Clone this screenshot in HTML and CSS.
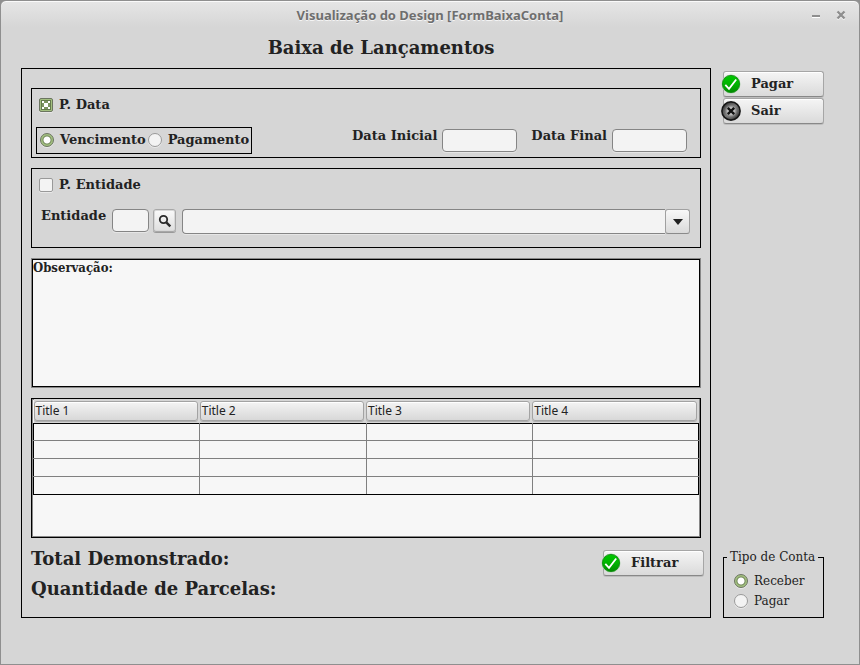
FILE: index.html
```html
<!DOCTYPE html>
<html lang="pt-BR">
<head>
<meta charset="utf-8">
<title>Visualização do Design [FormBaixaConta]</title>
<link rel="stylesheet" href="styles.css">
</head>
<body>
<svg class="defs" width="0" height="0" aria-hidden="true">
  <defs>
    <linearGradient id="green" x1="0" y1="0" x2="0" y2="1"><stop offset="0" stop-color="#00c800"/><stop offset=".5" stop-color="#00b400"/><stop offset="1" stop-color="#008a00"/></linearGradient>
    <linearGradient id="steel" x1="0" y1="0" x2="1" y2="1"><stop offset="0" stop-color="#2c2c2c"/><stop offset=".5" stop-color="#777"/><stop offset="1" stop-color="#303030"/></linearGradient>
    <radialGradient id="shine" cx=".5" cy=".5" r=".5"><stop offset="0" stop-color="#f0f0f0"/><stop offset=".5" stop-color="#b8b8b8"/><stop offset="1" stop-color="#777" stop-opacity="0"/></radialGradient>
  </defs>
  <symbol id="ok" viewBox="0 0 20 20">
    <circle cx="10" cy="10" r="9.5" fill="#a9cfa9"/>
    <circle cx="10" cy="10" r="8.6" fill="url(#green)" stroke="#078a07" stroke-width=".8"/>
    <path d="M4.3 10.8l3.7 4 7.2-9.3" fill="none" stroke="#fff" stroke-width="1.8"/>
  </symbol>
  <symbol id="exit" viewBox="0 0 20 20">
    <circle cx="10" cy="10" r="9.1" fill="url(#steel)" stroke="#161616" stroke-width="1.6"/>
    <circle cx="10" cy="10" r="7.4" fill="url(#shine)"/>
    <path d="M6.8 6.8l6.4 6.4M13.2 6.8l-6.4 6.4" stroke="#111" stroke-width="2.4"/>
  </symbol>
</svg>
<div class="window">
  <header class="titlebar">
    <span class="caption">Visualização do Design [FormBaixaConta]</span>
    <div class="controls">
      <button type="button" aria-label="Minimizar"><svg width="10" height="10"><path d="M1 7h8" stroke="#fff" stroke-width="2"/><path d="M1 6h8" stroke="#8e8e8e" stroke-width="2"/></svg></button>
      <button type="button" aria-label="Fechar"><svg width="10" height="10"><path d="M1.5 2.5l7 7m0-7l-7 7" stroke="#f4f4f4" stroke-width="2.4"/><path d="M1.5 1.5l7 7m0-7l-7 7" stroke="#8e8e8e" stroke-width="2.4"/></svg></button>
    </div>
  </header>
  <form class="content">
    <main>
      <h1>Baixa de Lançamentos</h1>
      <section class="panel">
        <div class="group dates">
          <label class="option"><input type="checkbox" checked>P. Data</label>
          <div class="line">
            <div class="choice">
              <label class="option"><input type="radio" name="por" checked>Vencimento</label>
              <label class="option"><input type="radio" name="por">Pagamento</label>
            </div>
            <div class="range">
              <label for="ini">Data Inicial</label><input id="ini" class="field date" type="text">
              <label for="fim">Data Final</label><input id="fim" class="field date" type="text">
            </div>
          </div>
        </div>
        <div class="group entity">
          <label class="option"><input type="checkbox">P. Entidade</label>
          <div class="line">
            <label for="ent">Entidade</label>
            <input id="ent" class="field code" type="text">
            <button type="button" class="search" aria-label="Buscar"><svg width="14" height="14" viewBox="0 0 14 14" fill="none" stroke="#2a2a2a"><circle cx="5.5" cy="5.5" r="3.7" stroke-width="1.8"/><path d="M8.3 8.3l4 4" stroke-width="2.4"/></svg></button>
            <div class="combo">
              <select aria-label="Nome da entidade"><option></option></select>
              <span class="arrow"><svg width="10" height="6"><path d="M0 0h10L5 6z" fill="#222"/></svg></span>
            </div>
          </div>
        </div>
        <textarea class="notes" aria-label="Observação">Observação:</textarea>
        <div class="grid">
          <table>
            <thead><tr><th><span>Title 1</span></th><th><span>Title 2</span></th><th><span>Title 3</span></th><th><span>Title 4</span></th></tr></thead>
            <tbody>
              <tr><td></td><td></td><td></td><td></td></tr>
              <tr><td></td><td></td><td></td><td></td></tr>
              <tr><td></td><td></td><td></td><td></td></tr>
              <tr><td></td><td></td><td></td><td></td></tr>
            </tbody>
          </table>
        </div>
        <div class="summary">
          <div class="totals"><p>Total Demonstrado:</p><p>Quantidade de Parcelas:</p></div>
          <button type="button" class="action"><svg width="20" height="20"><use href="#ok"/></svg>Filtrar</button>
        </div>
      </section>
    </main>
    <aside>
      <div class="actions">
        <button type="button" class="action"><svg width="20" height="20"><use href="#ok"/></svg>Pagar</button>
        <button type="button" class="action"><svg width="20" height="20"><use href="#exit"/></svg>Sair</button>
      </div>
      <fieldset>
        <legend>Tipo de Conta</legend>
        <label class="option"><input type="radio" name="tipo" checked>Receber</label>
        <label class="option"><input type="radio" name="tipo">Pagar</label>
      </fieldset>
    </aside>
  </form>
</div>
</body>
</html>
```
FILE: styles.css
```css
* { box-sizing: border-box; }
body { margin: 0; background: #8f8f8f; color: #222; font: bold 13px/16px "DejaVu Serif", serif; }
.defs { position: absolute; }
h1, p { margin: 0; }
button, input, select, textarea { font: inherit; color: inherit; margin: 0; }

.window {
  min-height: 100vh;
  border: 1px solid #8f8f8f;
  border-radius: 6px 6px 0 0;
  background: linear-gradient(#e6e6e6, #d6d6d6 26px);
  box-shadow: inset 0 1px #fafafa;
}
.titlebar { display: grid; grid-template-columns: 1fr auto 1fr; align-items: center; height: 28px; padding: 0 13px; }
.caption { grid-column: 2; font: bold 13px/18px "Noto Sans", sans-serif; color: #6e6e6e; text-shadow: 0 1px #f4f4f4; }
.controls { display: flex; justify-content: flex-end; gap: 15px; }
.controls button { display: flex; padding: 0; border: 0; background: none; }

.content { display: grid; grid-template-columns: 1fr 101px; gap: 12px; padding: 0 35px 46px 20px; }
h1 { height: 39px; padding-left: 30px; font-size: 18px; line-height: 38px; text-align: center; }
.panel { display: flex; flex-direction: column; gap: 10px; padding: 19px 9px 13px; border: 1px solid #000; }
.group { border: 1px solid #000; }
.line { display: flex; align-items: flex-start; }
.option { display: flex; align-items: center; gap: 6px; }

input[type="checkbox"], input[type="radio"] {
  appearance: none;
  flex: none;
  width: 14px;
  height: 14px;
  border: 1px solid #999;
  border-radius: 2px;
  background: #f3f3f3;
  box-shadow: 0 1px #e8e8e8;
}
input[type="radio"] { border-radius: 50%; }
input[type="checkbox"]:checked {
  display: grid;
  place-items: center;
  border-color: #6b7560;
  background: #a3c080;
}
input[type="checkbox"]:checked::before {
  content: "";
  width: 8px;
  height: 8px;
  border: 1px solid #647a4c;
  background: linear-gradient(#fff 0 0) center / 4px 4px no-repeat,
    linear-gradient(#fff 0 0) 0 0 / 2px 2px no-repeat, linear-gradient(#fff 0 0) 100% 0 / 2px 2px no-repeat,
    linear-gradient(#fff 0 0) 0 100% / 2px 2px no-repeat, linear-gradient(#fff 0 0) 100% 100% / 2px 2px no-repeat, #7d9560;
}
input[type="radio"]:checked {
  border-color: #6b7560;
  background: radial-gradient(circle, #fff 0 3px, #71875a 4px, #a3c080 5px);
}

.dates { height: 70px; padding: 8px 13px 0 4px; }
.dates > .option, .entity > .option { padding-left: 3px; }
.dates .line { justify-content: space-between; margin-top: 14px; }
.choice { display: flex; gap: 2px; height: 27px; padding: 0 2px 2px 3px; border: 1px solid #000; }
.range { display: flex; gap: 14px; margin-top: 2px; }
.range label { line-height: 14px; }
.range .date { margin-left: -9px; }
.field { width: 75px; height: 23px; padding: 0 4px; border: 1px solid #858585; border-radius: 4px; background: #f3f3f3; box-shadow: 0 1px #e6e6e6; }

.entity { height: 80px; padding: 8px 10px 0 4px; }
.entity .line { gap: 6px; margin-top: 16px; padding-left: 5px; }
.entity .line > label { line-height: 14px; }
.code { width: 37px; }
.search { display: grid; place-items: center; width: 23px; height: 23px; margin-left: -2px; padding: 0; border: 1px solid #a8a8a8; border-radius: 3px; background: linear-gradient(#fafafa, #dedede); box-shadow: inset 0 0 0 1px #d8d8d8, 0 1px #999; }
.combo { display: flex; flex: 1; height: 25px; }
.combo select { appearance: none; flex: 1; border: 1px solid #858585; border-right: 0; border-radius: 4px 0 0 4px; background: #f3f3f3; box-shadow: 0 1px #e6e6e6; }
.arrow { display: grid; place-items: center; width: 25px; border: 1px solid #a0a0a0; border-bottom-color: #8a8a8a; border-radius: 3px; background: linear-gradient(#f8f8f8, #dadada); pointer-events: none; }

.notes { display: block; width: 100%; height: 130px; padding: 0 1px; border: 1px solid #888; outline: 1px solid #000; outline-offset: -2px; resize: none; background: #f7f7f7; font: bold 13px/18px "DejaVu Serif Condensed", "DejaVu Serif", serif; }
.grid { height: 140px; padding: 0 1px; border: 1px solid #000; background: #f7f7f7; box-shadow: inset 0 0 0 1px #888; }
table { width: 100%; border-collapse: collapse; table-layout: fixed; }
th { height: 24px; padding: 0 2px 0 0; background: #d6d6d6; font: 12px/18px "Noto Sans", sans-serif; text-align: left; }
th span { display: block; height: 20px; padding: 0 1px; border: 1px solid #a3a3a3; border-radius: 3px; background: linear-gradient(#f4f4f4, #d8d8d8); box-shadow: inset 0 1px #fff, 0 1px #b0b0b0; }
tbody { border: 1px solid #000; }
td { height: 18px; padding: 0; border: 1px solid #808080; }
tbody tr:first-child td { height: 17px; border-top-color: #000; }
tbody tr:last-child td { border-bottom-color: #000; }
td:first-child { border-left-color: #000; }
td:last-child { border-right-color: #000; }

.summary { display: flex; justify-content: space-between; align-items: flex-start; }
.totals { font-size: 18px; line-height: 30px; margin-top: -4px; }
.action { display: flex; align-items: center; gap: 10px; width: 101px; height: 26px; padding: 0; border: 1px solid #a6a6a6; border-bottom-color: #888; border-radius: 3px; background: linear-gradient(#f5f5f5, #dadada); box-shadow: inset 0 1px #fff, 0 1px #bdbdbd; }
.action svg { margin-left: -3px; }
.summary .action { margin: 2px -3px 0 0; }

aside { display: flex; flex-direction: column; justify-content: space-between; padding-top: 42px; }
.actions { display: grid; gap: 1px; }
fieldset { min-width: 0; margin: 0; padding: 4px 10px 6px; border: 1px solid #000; font-weight: normal; font-size: 12px; }
legend { margin-left: -7px; padding: 0 3px; white-space: nowrap; line-height: 20px; }
fieldset .option { height: 20px; }
```
